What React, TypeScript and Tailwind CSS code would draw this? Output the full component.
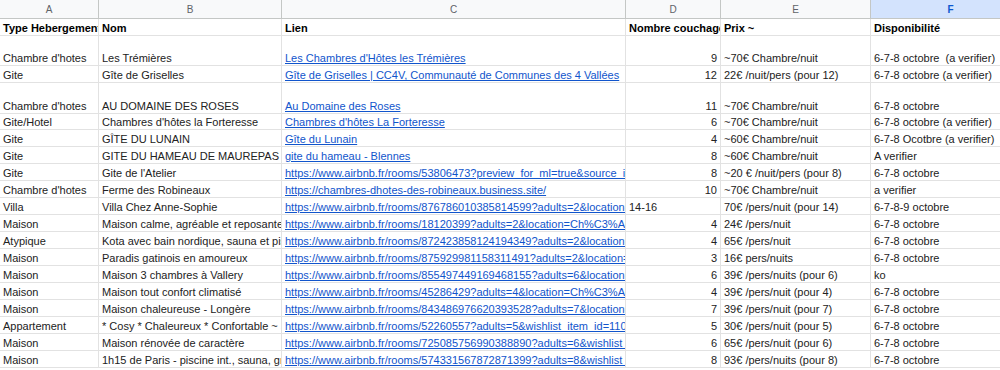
import React from "react";

type Row = {
  cells: [string, string, string, string, string, string];
  tall?: boolean;
  bold?: boolean;
};

const widths = ["w-[99px]", "w-[183px]", "w-[344px]", "w-[95px]", "w-[150px]", "w-[160px]"];
const letters = ["A", "B", "C", "D", "E", "F"];

const rows: Row[] = [
  { cells: ["Type Hebergement", "Nom", "Lien", "Nombre couchage", "Prix ~", "Disponibilité"], bold: true },
  { cells: ["Chambre d'hotes", "Les Trémières", "Les Chambres d'Hôtes les Trémières", "9", "~70€ Chambre/nuit", "6-7-8 octobre  (a verifier)"], tall: true },
  { cells: ["Gite", "Gîte de Griselles", "Gîte de Griselles | CC4V, Communauté de Communes des 4 Vallées", "12", "22€ /nuit/pers (pour 12)", "6-7-8 octobre (a verifier)"] },
  { cells: ["Chambre d'hotes", "AU DOMAINE DES ROSES", "Au Domaine des Roses", "11", "~70€ Chambre/nuit", "6-7-8 octobre"], tall: true },
  { cells: ["Gite/Hotel", "Chambres d'hôtes la Forteresse", "Chambres d'hôtes La Forteresse", "6", "~70€ Chambre/nuit", "6-7-8 octobre (a verifier)"] },
  { cells: ["Gite", "GÎTE DU LUNAIN", "Gîte du Lunain", "4", "~60€ Chambre/nuit", "6-7-8 Ocotbre (a verifier)"] },
  { cells: ["Gite", "GITE DU HAMEAU DE MAUREPAS", "gite du hameau - Blennes", "8", "~60€ Chambre/nuit", "A verifier"] },
  { cells: ["Gite", "Gite de l'Atelier", "https://www.airbnb.fr/rooms/53806473?preview_for_ml=true&source_impression_id=p3", "8", "~20 € /nuit/pers (pour 8)", "6-7-8 octobre"] },
  { cells: ["Chambre d'hotes", "Ferme des Robineaux", "https://chambres-dhotes-des-robineaux.business.site/", "10", "~70€ Chambre/nuit", "a verifier"] },
  { cells: ["Villa", "Villa Chez Anne-Sophie", "https://www.airbnb.fr/rooms/876786010385814599?adults=2&location=Ch", "14-16", "70€ /pers/nuit (pour 14)", "6-7-8-9 octobre"] },
  { cells: ["Maison", "Maison calme, agréable et reposante", "https://www.airbnb.fr/rooms/18120399?adults=2&location=Ch%C3%A9roy", "4", "24€ /pers/nuit", "6-7-8 octobre"] },
  { cells: ["Atypique", "Kota avec bain nordique, sauna et piscine", "https://www.airbnb.fr/rooms/872423858124194349?adults=2&location=Ch", "4", "65€ /pers/nuit", "6-7-8 octobre"] },
  { cells: ["Maison", "Paradis gatinois en amoureux", "https://www.airbnb.fr/rooms/875929981158311491?adults=2&location=Ch", "3", "16€ pers/nuits", "6-7-8 octobre"] },
  { cells: ["Maison", "Maison 3 chambres à Vallery", "https://www.airbnb.fr/rooms/855497449169468155?adults=6&location=Ch", "6", "39€ /pers/nuits (pour 6)", "ko"] },
  { cells: ["Maison", "Maison tout confort climatisé", "https://www.airbnb.fr/rooms/45286429?adults=4&location=Ch%C3%A9roy", "4", "39€ /pers/nuit (pour 4)", "6-7-8 octobre"] },
  { cells: ["Maison", "Maison chaleureuse - Longère", "https://www.airbnb.fr/rooms/843486976620393528?adults=7&location=Ch", "7", "39€ /pers/nuit (pour 7)", "6-7-8 octobre"] },
  { cells: ["Appartement", "* Cosy * Chaleureux * Confortable ~ Studio", "https://www.airbnb.fr/rooms/52260557?adults=5&wishlist_item_id=11000", "5", "30€ /pers/nuit (pour 5)", "6-7-8 octobre"] },
  { cells: ["Maison", "Maison rénovée de caractère", "https://www.airbnb.fr/rooms/725085756990388890?adults=6&wishlist_item", "6", "65€ /pers/nuit (pour 6)", "6-7-8 octobre"] },
  { cells: ["Maison", "1h15 de Paris - piscine int., sauna, grand jardin", "https://www.airbnb.fr/rooms/574331567872871399?adults=8&wishlist_item", "8", "93€ /pers/nuits (pour 8)", "6-7-8 octobre"] },
];

function Cell({ text, col, bold }: { text: string; col: number; bold?: boolean }) {
  const isNumber = col === 3 && /^\d+$/.test(text);
  const isLink = col === 2 && !bold;
  return (
    <div
      className={`${widths[col]} shrink-0 overflow-hidden whitespace-pre border-r border-b border-[#e2e2e2] px-[3px] flex items-end ${
        isNumber ? "justify-end" : ""
      }`}
    >
      {isLink ? (
        <span className="text-[#1155cc] underline underline-offset-[1px]">{text}</span>
      ) : (
        <span className={bold ? "font-bold text-black" : "text-[#222]"}>{text}</span>
      )}
    </div>
  );
}

export default function App() {
  return (
    <div className="w-[1000px] h-[370px] overflow-hidden bg-white text-[11px] leading-[13px] font-['Liberation_Sans',Arial,sans-serif]">
      <div className="flex h-[19px]">
        {letters.map((l, i) => (
          <div
            key={l}
            className={`${widths[i]} shrink-0 flex items-center justify-center border-r border-b text-[10px] ${
              l === "F"
                ? "bg-[#d3e3fd] border-[#c4c7c5] text-[#0b57d0] font-bold"
                : "bg-[#f8f9fa] border-[#c4c7c5] text-[#5f6368]"
            }`}
          >
            {l}
          </div>
        ))}
      </div>
      {rows.map((r, i) => (
        <div key={i} className={`flex ${r.tall ? "h-[30.3px]" : i === 0 ? "h-[17px]" : "h-[16.95px]"}`}>
          {r.cells.map((c, j) => (
            <Cell key={j} text={c} col={j} bold={r.bold} />
          ))}
        </div>
      ))}
    </div>
  );
}
